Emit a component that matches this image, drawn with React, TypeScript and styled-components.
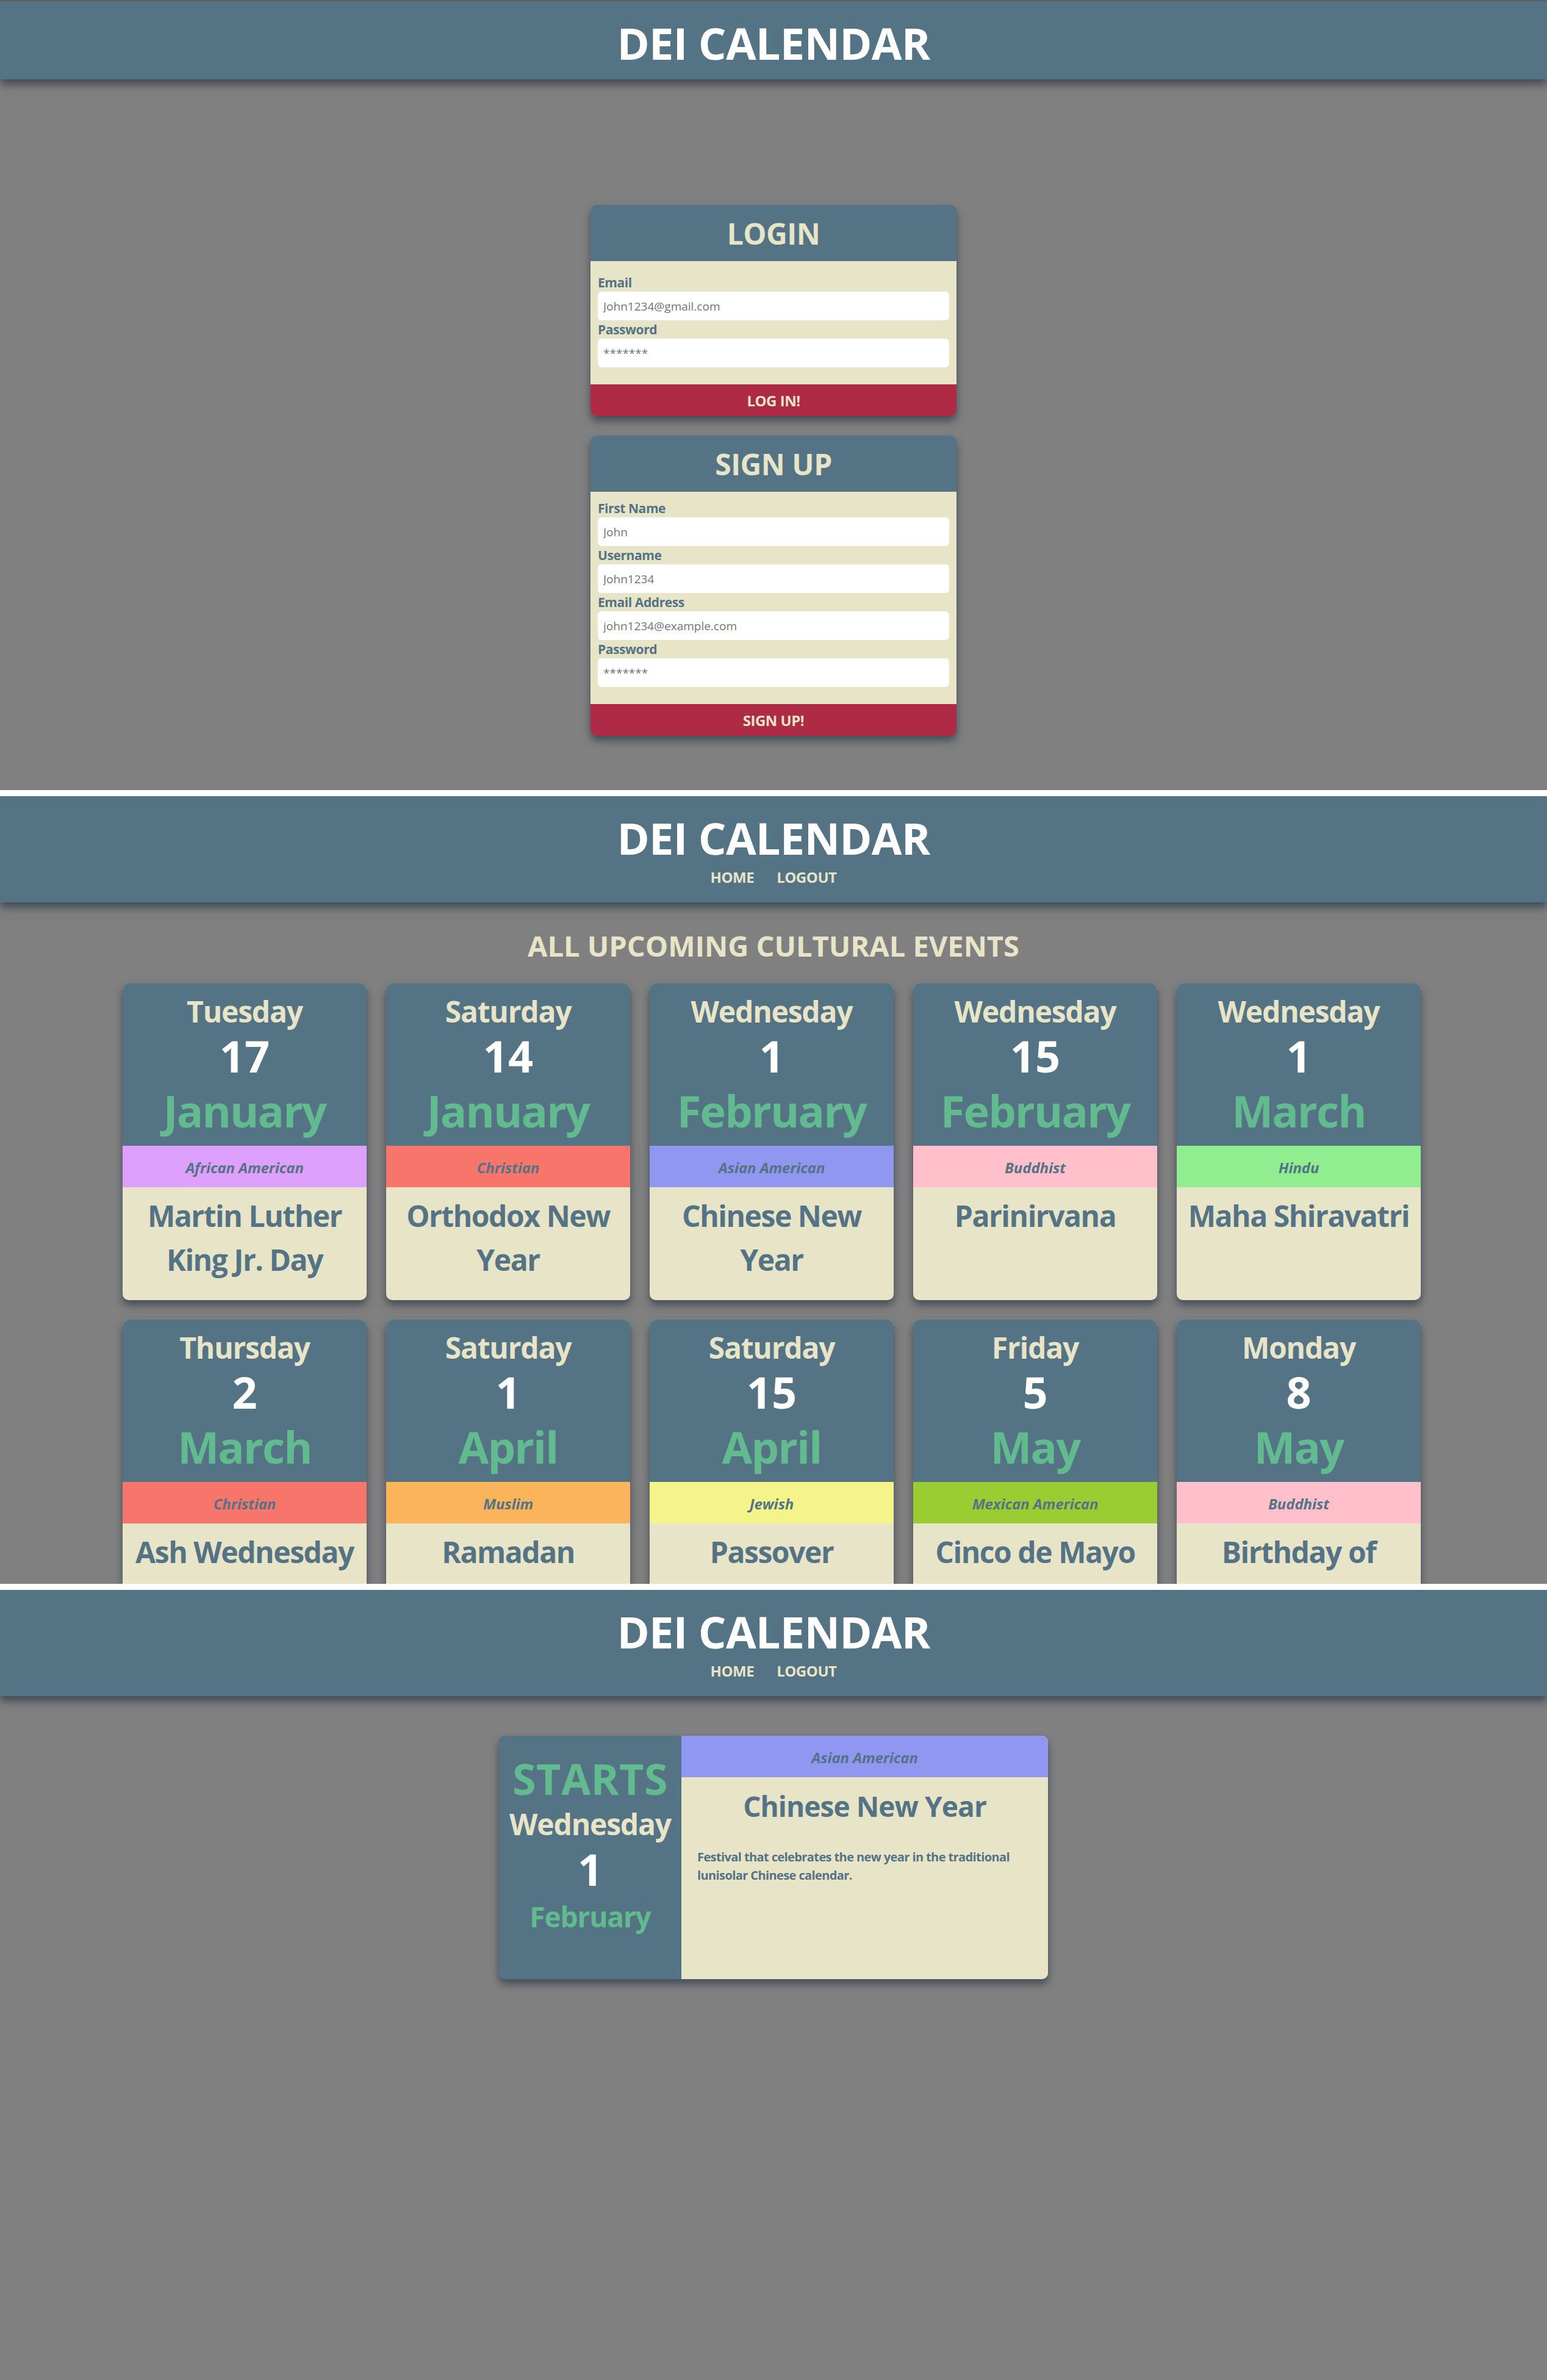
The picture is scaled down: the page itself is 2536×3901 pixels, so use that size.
import React from "react";
import styled, { createGlobalStyle } from "styled-components";

const SLATE = "#547385";
const CREAM = "#e8e4c8";
const GREEN = "#62bb8f";
const CRIMSON = "#ae2a45";
const GRAY = "#808080";
const SHADOW = "0 8px 14px rgba(18, 32, 52, 0.55)";

const GlobalStyle = createGlobalStyle`
  html, body {
    margin: 0;
    padding: 0;
    background: #ffffff;
  }
  body {
    font-family: "Open Sans", "Noto Sans", sans-serif;
  }
  * { box-sizing: border-box; }
`;

const Page = styled.div`
  display: flex;
  flex-direction: column;
  gap: 10px;
  width: 2536px;
`;

const Screen = styled.section<{ $height: number; $topBorder?: boolean }>`
  height: ${(p) => p.$height}px;
  background: ${GRAY};
  overflow: hidden;
  border-top: ${(p) => (p.$topBorder ? "2px solid #5e5e5e" : "none")};
  display: flex;
  flex-direction: column;
`;

const Header = styled.header`
  position: relative;
  z-index: 2;
  background: ${SLATE};
  box-shadow: 0 8px 14px rgba(18, 32, 52, 0.6);
  padding: 32px 0 24px;
  text-align: center;
  flex-shrink: 0;
`;

const Brand = styled.h1`
  margin: 0;
  font-size: 72px;
  line-height: 72px;
  font-weight: 700;
  color: #ffffff;
  letter-spacing: -0.01em;
`;

const Nav = styled.nav`
  display: flex;
  justify-content: center;
  gap: 37px;
  margin: 17px 0 5px;
`;

const NavLink = styled.a`
  font-size: 24px;
  line-height: 24px;
  font-weight: 700;
  color: ${CREAM};
  text-decoration: none;
  letter-spacing: -0.02em;
`;

/* ---------- Screen 1: auth ---------- */

const AuthColumn = styled.div`
  display: flex;
  flex-direction: column;
  align-items: center;
  gap: 32px;
  margin-top: 206px;
`;

const AuthCard = styled.form`
  width: 600px;
  border-radius: 10px;
  overflow: hidden;
  box-shadow: ${SHADOW};
  display: flex;
  flex-direction: column;
`;

const AuthTitle = styled.h2`
  margin: 0;
  height: 92px;
  padding-top: 2px;
  background: ${SLATE};
  color: ${CREAM};
  font-size: 48px;
  line-height: 90px;
  font-weight: 700;
  text-align: center;
  letter-spacing: -0.01em;
`;

const AuthBody = styled.div<{ $padTop: number }>`
  background: ${CREAM};
  padding: ${(p) => p.$padTop}px 12px 28px;
  display: flex;
  flex-direction: column;
`;

const FieldLabel = styled.label`
  display: block;
  height: 30px;
  font-size: 21px;
  line-height: 30px;
  font-weight: 700;
  color: ${SLATE};
  letter-spacing: -0.02em;
`;

const TextInput = styled.input`
  display: block;
  width: 100%;
  height: 47px;
  border: none;
  border-radius: 6px;
  background: #ffffff;
  padding: 0 9px;
  font-family: "Open Sans", "Noto Sans", sans-serif;
  font-size: 19px;
  color: #333;
  outline: none;
  &::placeholder {
    color: #757575;
  }
`;

const SubmitButton = styled.button`
  display: block;
  width: 100%;
  height: 52px;
  border: none;
  background: ${CRIMSON};
  color: ${CREAM};
  font-family: "Open Sans", "Noto Sans", sans-serif;
  font-size: 24px;
  font-weight: 700;
  letter-spacing: -0.02em;
  cursor: pointer;
`;

/* ---------- Screen 2: events ---------- */

const SectionTitle = styled.h2`
  margin: 48px 0 0;
  font-size: 47px;
  line-height: 47px;
  font-weight: 700;
  color: ${CREAM};
  text-align: center;
  letter-spacing: 0;
`;

const EventGrid = styled.div`
  display: grid;
  grid-template-columns: repeat(5, 400px);
  gap: 32px 32px;
  justify-content: center;
  margin-top: 38px;
  padding-right: 6px;
`;

const EventCard = styled.article`
  border-radius: 10px;
  overflow: hidden;
  background: ${CREAM};
  box-shadow: ${SHADOW};
  display: flex;
  flex-direction: column;
`;

const DateBlock = styled.div`
  background: ${SLATE};
  height: 266px;
  padding-top: 22px;
  display: flex;
  flex-direction: column;
  align-items: center;
  text-align: center;
`;

const DayName = styled.div`
  font-size: 48px;
  line-height: 48px;
  font-weight: 700;
  color: ${CREAM};
  letter-spacing: -0.025em;
`;

const DayNumber = styled.div`
  margin-top: 12px;
  font-size: 72px;
  line-height: 72px;
  font-weight: 700;
  color: #ffffff;
`;

const MonthName = styled.div`
  margin-top: 18px;
  font-size: 72px;
  line-height: 72px;
  font-weight: 700;
  color: ${GREEN};
  letter-spacing: -0.025em;
`;

const CategoryBand = styled.div<{ $bg: string }>`
  height: 68px;
  background: ${(p) => p.$bg};
  display: flex;
  align-items: center;
  justify-content: center;
  font-size: 24px;
  font-style: italic;
  font-weight: 700;
  color: ${SLATE};
  letter-spacing: -0.005em;
  padding-top: 2px;
`;

const EventName = styled.h3`
  margin: 0;
  padding: 11px 8px 30px;
  font-size: 48px;
  line-height: 72px;
  font-weight: 700;
  color: ${SLATE};
  text-align: center;
  letter-spacing: -0.03em;
`;

/* ---------- Screen 3: detail ---------- */

const DetailCard = styled.article`
  width: 900px;
  height: 399px;
  margin: 65px auto 0;
  border-radius: 10px;
  overflow: hidden;
  box-shadow: ${SHADOW};
  display: grid;
  grid-template-columns: 299px 1fr;
`;

const DetailDates = styled.div`
  background: ${SLATE};
  padding-top: 35px;
  display: flex;
  flex-direction: column;
  align-items: center;
`;

const StartsLabel = styled.div`
  font-size: 70px;
  line-height: 70px;
  font-weight: 700;
  color: ${GREEN};
  letter-spacing: 0.005em;
`;

const DetailDay = styled(DayName)`
  margin-top: 16px;
`;

const DetailNumber = styled(DayNumber)`
  margin-top: 13px;
`;

const DetailMonth = styled.div`
  margin-top: 19px;
  font-size: 46px;
  line-height: 46px;
  font-weight: 700;
  color: ${GREEN};
  letter-spacing: -0.025em;
`;

const DetailInfo = styled.div`
  background: ${CREAM};
  display: flex;
  flex-direction: column;
`;

const DetailTitle = styled.h2`
  margin: 24px 0 0;
  font-size: 46px;
  line-height: 46px;
  font-weight: 700;
  color: ${SLATE};
  text-align: center;
  letter-spacing: -0.02em;
`;

const DetailText = styled.p`
  margin: 46px 26px 0;
  font-size: 20px;
  line-height: 30px;
  font-weight: 700;
  color: ${SLATE};
  letter-spacing: -0.03em;
`;

/* ---------- data ---------- */

const CATEGORY_COLORS: Record<string, string> = {
  "African American": "#dda0fd",
  Christian: "#f7756b",
  "Asian American": "#8f97f1",
  Buddhist: "#ffc0cb",
  Hindu: "#90ee90",
  Muslim: "#fcb45b",
  Jewish: "#f4f48b",
  "Mexican American": "#9acd32",
};

type EventItem = {
  day: string;
  date: number;
  month: string;
  category: string;
  name: string;
};

const EVENTS: EventItem[] = [
  { day: "Tuesday", date: 17, month: "January", category: "African American", name: "Martin Luther King Jr. Day" },
  { day: "Saturday", date: 14, month: "January", category: "Christian", name: "Orthodox New Year" },
  { day: "Wednesday", date: 1, month: "February", category: "Asian American", name: "Chinese New Year" },
  { day: "Wednesday", date: 15, month: "February", category: "Buddhist", name: "Parinirvana" },
  { day: "Wednesday", date: 1, month: "March", category: "Hindu", name: "Maha Shiravatri" },
  { day: "Thursday", date: 2, month: "March", category: "Christian", name: "Ash Wednesday" },
  { day: "Saturday", date: 1, month: "April", category: "Muslim", name: "Ramadan" },
  { day: "Saturday", date: 15, month: "April", category: "Jewish", name: "Passover" },
  { day: "Friday", date: 5, month: "May", category: "Mexican American", name: "Cinco de Mayo" },
  { day: "Monday", date: 8, month: "May", category: "Buddhist", name: "Birthday of Buddha" },
];

const SiteHeader: React.FC<{ withNav?: boolean }> = ({ withNav }) => (
  <Header>
    <Brand>DEI CALENDAR</Brand>
    {withNav && (
      <Nav>
        <NavLink href="#">HOME</NavLink>
        <NavLink href="#">LOGOUT</NavLink>
      </Nav>
    )}
  </Header>
);

const Field: React.FC<{ label: string; placeholder: string; type?: string }> = ({
  label,
  placeholder,
  type = "text",
}) => (
  <div>
    <FieldLabel>{label}</FieldLabel>
    <TextInput type={type} placeholder={placeholder} />
  </div>
);

export default function App() {
  return (
    <>
      <GlobalStyle />
      <Page>
        <Screen $height={1295} $topBorder>
          <SiteHeader />
          <AuthColumn>
            <AuthCard onSubmit={(e) => e.preventDefault()}>
              <AuthTitle>LOGIN</AuthTitle>
              <AuthBody $padTop={20}>
                <Field label="Email" placeholder="John1234@gmail.com" />
                <Field label="Password" placeholder="*******" type="password" />
              </AuthBody>
              <SubmitButton type="submit">LOG IN!</SubmitButton>
            </AuthCard>
            <AuthCard onSubmit={(e) => e.preventDefault()}>
              <AuthTitle>SIGN UP</AuthTitle>
              <AuthBody $padTop={12}>
                <Field label="First Name" placeholder="John" />
                <Field label="Username" placeholder="John1234" />
                <Field label="Email Address" placeholder="john1234@example.com" />
                <Field label="Password" placeholder="*******" type="password" />
              </AuthBody>
              <SubmitButton type="submit">SIGN UP!</SubmitButton>
            </AuthCard>
          </AuthColumn>
        </Screen>

        <Screen $height={1291}>
          <SiteHeader withNav />
          <SectionTitle>ALL UPCOMING CULTURAL EVENTS</SectionTitle>
          <EventGrid>
            {EVENTS.map((ev) => (
              <EventCard key={ev.name}>
                <DateBlock>
                  <DayName>{ev.day}</DayName>
                  <DayNumber>{ev.date}</DayNumber>
                  <MonthName>{ev.month}</MonthName>
                </DateBlock>
                <CategoryBand $bg={CATEGORY_COLORS[ev.category]}>{ev.category}</CategoryBand>
                <EventName>{ev.name}</EventName>
              </EventCard>
            ))}
          </EventGrid>
        </Screen>

        <Screen $height={1295}>
          <SiteHeader withNav />
          <DetailCard>
            <DetailDates>
              <StartsLabel>STARTS</StartsLabel>
              <DetailDay>Wednesday</DetailDay>
              <DetailNumber>1</DetailNumber>
              <DetailMonth>February</DetailMonth>
            </DetailDates>
            <DetailInfo>
              <CategoryBand $bg={CATEGORY_COLORS["Asian American"]}>Asian American</CategoryBand>
              <DetailTitle>Chinese New Year</DetailTitle>
              <DetailText>
                Festival that celebrates the new year in the traditional lunisolar Chinese calendar.
              </DetailText>
            </DetailInfo>
          </DetailCard>
        </Screen>
      </Page>
    </>
  );
}
